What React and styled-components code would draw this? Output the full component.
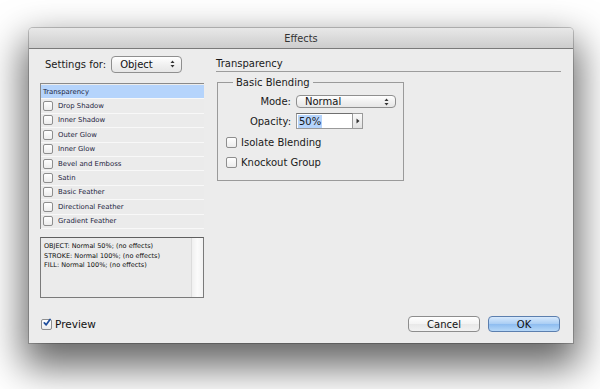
import React from "react";
import styled, { createGlobalStyle } from "styled-components";

const GlobalStyle = createGlobalStyle`
  html, body {
    margin: 0;
    padding: 0;
    background: #ffffff;
  }
  body {
    font-family: "DejaVu Sans", "Liberation Sans", sans-serif;
    color: #1a1a1a;
  }
`;

const EFFECTS = [
  "Drop Shadow",
  "Inner Shadow",
  "Outer Glow",
  "Inner Glow",
  "Bevel and Emboss",
  "Satin",
  "Basic Feather",
  "Directional Feather",
  "Gradient Feather",
];

const Page = styled.div`
  padding: 28px 0 0 29px;
  height: 389px;
  box-sizing: border-box;
  overflow: hidden;
`;

const Window = styled.div`
  width: 544px;
  height: 315px;
  display: flex;
  flex-direction: column;
  background: #ececec;
  border-radius: 4px 4px 0 0;
  box-shadow: 0 0 0 1px rgba(0, 0, 0, 0.2), 0 18px 38px 6px rgba(0, 0, 0, 0.6);
`;

const TitleBar = styled.div`
  height: 20px;
  display: flex;
  align-items: center;
  justify-content: center;
  border-radius: 4px 4px 0 0;
  background: linear-gradient(#e8e8e8, #cdcdcd);
  border-bottom: 1px solid #7a7a7a;
  font-size: 9.8px;
  color: #333;
`;

const Body = styled.div`
  flex: 1;
  display: flex;
  flex-direction: column;
  padding: 7px 12px 11px 11px;
`;

const Main = styled.div`
  display: flex;
  gap: 12px;
`;

const LeftColumn = styled.div`
  width: 164px;
  display: flex;
  flex-direction: column;
`;

const SettingsRow = styled.div`
  display: flex;
  align-items: center;
  gap: 5px;
  height: 16px;
  margin-left: 5px;
  font-size: 10px;
`;

const PopUp = styled.div`
  position: relative;
  display: flex;
  align-items: center;
  width: ${(p) => p.$width}px;
  height: ${(p) => p.$height}px;
  box-sizing: border-box;
  padding-left: 8px;
  border: 1px solid #8f8f8f;
  border-radius: 4px;
  background: linear-gradient(#ffffff, #f1f1f1 50%, #e6e6e6);
  font-size: 10px;
  color: #111;
`;

const Arrows = styled.svg`
  position: absolute;
  right: 6px;
  top: 50%;
  transform: translateY(-50%);
`;

const List = styled.div`
  margin-top: 11px;
  height: 146px;
  padding-top: 1px;
  border-left: 1px solid #8a8a8a;
  border-top: 1px solid #8a8a8a;
  box-sizing: border-box;
  display: flex;
  flex-direction: column;
`;

const Row = styled.div`
  height: 14.4px;
  box-sizing: border-box;
  flex-shrink: 0;
  display: flex;
  align-items: center;
  gap: 5px;
  padding-left: 2px;
  background: ${(p) => (p.$selected ? "#b5d4fc" : "#ebebeb")};
  border-bottom: 1px solid #f8f8f8;
  font-size: 6.9px;
  color: #1c2440;
`;

const Box = styled.span`
  width: ${(p) => p.$size}px;
  height: ${(p) => p.$size}px;
  box-sizing: border-box;
  border: 1px solid #8e8e8e;
  border-radius: 2px;
  background: linear-gradient(#ffffff, #ececec);
  display: inline-flex;
  align-items: center;
  justify-content: center;
  flex-shrink: 0;
`;

const InfoBox = styled.div`
  margin-top: 8px;
  height: 61px;
  box-sizing: border-box;
  border: 1px solid #7a7a7a;
  border-top-color: #5f5f5f;
  display: flex;
  background: #ebebeb;
`;

const InfoText = styled.div`
  flex: 1;
  padding: 4px 0 0 3px;
  font-size: 6.5px;
  line-height: 9.6px;
  color: #0e0e0e;
  white-space: nowrap;
`;

const ScrollTrack = styled.div`
  width: 11px;
  border-left: 1px solid #dcdcdc;
  background: linear-gradient(90deg, #f0f0f0, #fbfbfb 50%, #f2f2f2);
`;

const RightColumn = styled.div`
  flex: 1;
  display: flex;
  flex-direction: column;
`;

const SectionTitle = styled.div`
  height: 15px;
  display: flex;
  align-items: center;
  border-bottom: 1px solid #9c9c9c;
  font-size: 10px;
  color: #1a1a1a;
`;

const Group = styled.fieldset`
  margin: 5px 0 0 1px;
  width: 187px;
  height: 104px;
  box-sizing: border-box;
  border: 1px solid #9a9a9a;
  padding: 5px 0 0 8px;
`;

const Legend = styled.legend`
  padding: 0 3px;
  margin-left: 7px;
  font-size: 10px;
  color: #1a1a1a;
`;

const FormGrid = styled.div`
  display: grid;
  grid-template-columns: 65px auto;
  column-gap: 5px;
  row-gap: 5px;
  align-items: center;
  margin-top: 2px;
`;

const Label = styled.span`
  text-align: right;
  font-size: 10px;
`;

const Field = styled.div`
  display: flex;
  height: 16px;
`;

const Input = styled.div`
  width: 57px;
  box-sizing: border-box;
  border: 1px solid #9a9a9a;
  border-top-color: #6f6f6f;
  background: #ffffff;
  padding: 1px;
  display: flex;
  align-items: center;
  font-size: 10px;
`;

const Selected = styled.span`
  background: #b5d4fc;
  padding: 1px 1px;
`;

const Stepper = styled.div`
  width: 10px;
  box-sizing: border-box;
  border: 1px solid #9a9a9a;
  border-left: none;
  background: linear-gradient(#fafafa, #e2e2e2);
  display: flex;
  align-items: center;
  justify-content: center;
`;

const CheckRow = styled.label`
  display: flex;
  align-items: center;
  gap: 4px;
  font-size: 10px;
  margin-top: ${(p) => p.$top}px;
`;

const Footer = styled.div`
  margin-top: auto;
  display: flex;
  align-items: center;
  height: 16px;
`;

const Preview = styled.label`
  display: flex;
  align-items: center;
  gap: 3px;
  margin-left: 1px;
  font-size: 10.5px;
  color: #111;
`;

const Buttons = styled.div`
  margin-left: auto;
  margin-right: 1px;
  display: flex;
  gap: 8px;
`;

const Button = styled.button`
  width: 72px;
  height: 16px;
  padding: 0;
  border-radius: 4px;
  font-family: inherit;
  font-size: 10px;
  color: #111;
  border: 1px solid ${(p) => (p.$primary ? "#5c7fae" : "#8d8d8d")};
  background: ${(p) =>
    p.$primary
      ? "linear-gradient(#d7e9fc, #a9cdf4 50%, #8dbcf0 51%, #b6d8f8)"
      : "linear-gradient(#ffffff, #f3f3f3 50%, #e8e8e8 51%, #f2f2f2)"};
`;

const UpDown = () => (
  <Arrows width="5" height="8" viewBox="0 0 5 8">
    <path d="M2.5 0.5 L4.5 3 L0.5 3 Z" fill="#333" />
    <path d="M2.5 7.5 L4.5 5 L0.5 5 Z" fill="#333" />
  </Arrows>
);

const CheckBox = ({ size = 10, checked }) => (
  <Box $size={size}>
    {checked && (
      <svg width={size + 2} height={size + 2} viewBox="0 0 12 12" style={{ marginTop: -3, marginLeft: 1 }}>
        <path d="M2 6.5 L4.8 9.5 L10.5 1.5" fill="none" stroke="#1f4e9c" strokeWidth="2.6" strokeLinecap="round" strokeLinejoin="round" />
      </svg>
    )}
  </Box>
);

export default function App() {
  return (
    <Page>
      <GlobalStyle />
      <Window>
        <TitleBar>Effects</TitleBar>
        <Body>
          <Main>
            <LeftColumn>
              <SettingsRow>
                <span>Settings for:</span>
                <PopUp $width={71} $height={17}>
                  Object
                  <UpDown />
                </PopUp>
              </SettingsRow>
              <List>
                <Row $selected>Transparency</Row>
                {EFFECTS.map((name) => (
                  <Row key={name}>
                    <CheckBox size={10} />
                    {name}
                  </Row>
                ))}
              </List>
              <InfoBox>
                <InfoText>
                  OBJECT: Normal 50%; (no effects)
                  <br />
                  STROKE: Normal 100%; (no effects)
                  <br />
                  FILL: Normal 100%; (no effects)
                </InfoText>
                <ScrollTrack />
              </InfoBox>
            </LeftColumn>
            <RightColumn>
              <SectionTitle>Transparency</SectionTitle>
              <Group>
                <Legend>Basic Blending</Legend>
                <FormGrid>
                  <Label>Mode:</Label>
                  <PopUp $width={100} $height={13}>
                    Normal
                    <UpDown />
                  </PopUp>
                  <Label>Opacity:</Label>
                  <Field>
                    <Input>
                      <Selected>50%</Selected>
                    </Input>
                    <Stepper>
                      <svg width="4" height="6" viewBox="0 0 4 6">
                        <path d="M0.5 0.5 L3.5 3 L0.5 5.5 Z" fill="#333" />
                      </svg>
                    </Stepper>
                  </Field>
                </FormGrid>
                <CheckRow $top={8}>
                  <CheckBox size={11} />
                  Isolate Blending
                </CheckRow>
                <CheckRow $top={9}>
                  <CheckBox size={11} />
                  Knockout Group
                </CheckRow>
              </Group>
            </RightColumn>
          </Main>
          <Footer>
            <Preview>
              <CheckBox size={11} checked />
              Preview
            </Preview>
            <Buttons>
              <Button>Cancel</Button>
              <Button $primary>OK</Button>
            </Buttons>
          </Footer>
        </Body>
      </Window>
    </Page>
  );
}
